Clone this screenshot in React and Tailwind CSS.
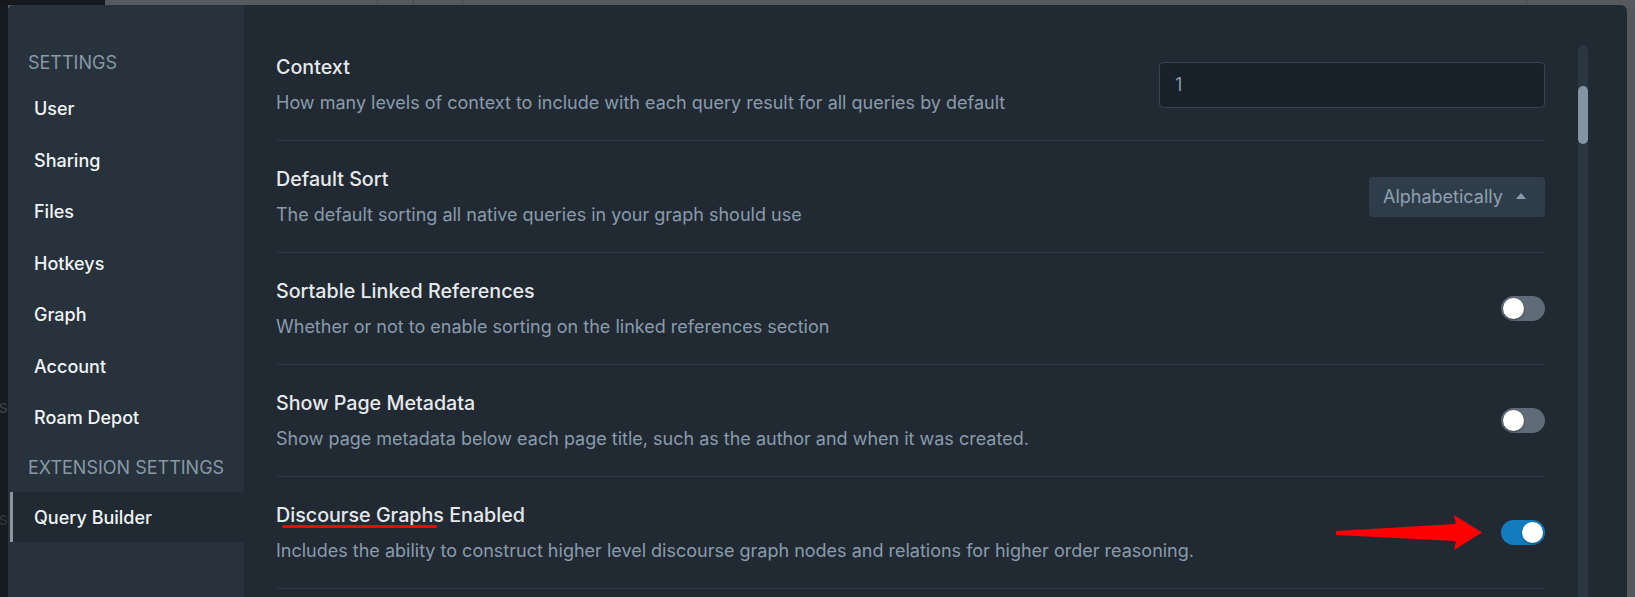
export default function App() {
  const rows = [
    { t: "Context", d: "How many levels of context to include with each query result for all queries by default", c: "input" },
    { t: "Default Sort", d: "The default sorting all native queries in your graph should use", c: "select" },
    { t: "Sortable Linked References", d: "Whether or not to enable sorting on the linked references section", c: "off" },
    { t: "Show Page Metadata", d: "Show page metadata below each page title, such as the author and when it was created.", c: "off" },
    { t: "Discourse Graphs Enabled", d: "Includes the ability to construct higher level discourse graph nodes and relations for higher order reasoning.", c: "on" },
  ];
  const items = ["User", "Sharing", "Files", "Hotkeys", "Graph", "Account", "Roam Depot"];
  return (
    <div className="w-[1635px] h-[597px] overflow-hidden flex flex-col bg-[#55595e] font-['Inter',sans-serif]">
      {/* backdrop top strip */}
      <div className="h-[5px] flex shrink-0">
        <div className="w-[105px] bg-[#15191e]" />
        <div className="flex-1 flex bg-[#565a5f]">
          <div className="w-[273px] border-r border-[#484c51]" />
          <div className="w-[36px] border-r border-[#484c51]" />
          <div className="w-[49px] border-r border-[#484c51]" />
          <div className="w-[1064px] border-r border-[#484c51]" />
        </div>
      </div>
      <div className="flex-1 flex min-h-0">
        {/* left backdrop */}
        <div className="w-[8px] bg-[#161b21] relative overflow-hidden">
          <div className="absolute right-0 top-[388px] text-[18px] text-[#3a424b] whitespace-nowrap">ns</div>
          <div className="absolute right-0 top-[500px] text-[18px] text-[#2c333b] whitespace-nowrap">s</div>
        </div>
        {/* dialog */}
        <div className="flex-1 flex rounded-t-[6px] overflow-hidden bg-[#212a33]">
          {/* sidebar */}
          <div className="w-[236px] shrink-0 bg-[#27323c] pt-[37px] flex flex-col">
            <div className="h-[41px] flex items-center pl-[20px] text-[18px] text-[#8798a6] uppercase">Settings</div>
            {items.map((i) => (
              <div key={i} className="h-[51.5px] flex items-center pl-[26px] text-[18px] font-medium text-[#f1f4f6]">{i}</div>
            ))}
            <div className="h-[48.5px] flex items-center pl-[20px] text-[18px] text-[#8798a6] uppercase">Extension Settings</div>
            <div className="h-[50px] ml-[2px] flex items-center border-l-[3px] border-[#8c949c] bg-[#212a33] pl-[21px] text-[18px] font-medium text-[#f1f4f6]">Query Builder</div>
          </div>
          {/* main */}
          <div className="flex-1 flex pl-[32px]">
            <div className="w-[1269px] pt-[24px] flex flex-col">
              {rows.map((r, idx) => (
                <div key={r.t} className="h-[112px] shrink-0 flex items-center justify-between border-b border-[#2b3945]">
                  <div className="flex flex-col">
                    <div className="text-[19.7px] leading-[26px] font-medium text-[#e6e9ec]">
                      {idx === 4 ? (
                        <>
                          <span className="relative">
                            Discourse Graphs
                            <span className="absolute left-[6px] top-[22px] w-[155px] h-[3px] rounded-full bg-[#f50000]" />
                          </span>{" "}
                          Enabled
                        </>
                      ) : (
                        r.t
                      )}
                    </div>
                    <div className="mt-[11px] text-[18px] leading-[24px] text-[#8a9bab]">{r.d}</div>
                  </div>
                  {r.c === "input" && (
                    <div className="w-[386px] h-[46px] rounded-[4px] border border-[#36434f] bg-[#18202a] flex items-center pl-[15px] text-[18px] text-[#8a9bab]">1</div>
                  )}
                  {r.c === "select" && (
                    <div className="w-[176px] h-[40px] rounded-[4px] bg-[#2f3d4a] flex items-center justify-between pl-[14px] pr-[19px] text-[18px] text-[#8fa0b0]">
                      <span>Alphabetically</span>
                      <svg width="10" height="6" viewBox="0 0 10 6" className="mb-[2px]">
                        <path d="M0 6 L5 0 L10 6 Z" fill="#8a9bab" />
                      </svg>
                    </div>
                  )}
                  {r.c === "off" && (
                    <div className="w-[44px] h-[25px] rounded-full bg-[#5f6b76] p-[2px] flex items-center">
                      <div className="w-[21px] h-[21px] rounded-full bg-white shadow-[0_1px_2px_rgba(0,0,0,0.4)]" />
                    </div>
                  )}
                  {r.c === "on" && (
                    <div className="relative w-[44px] h-[25px] rounded-full bg-[#137cbd] p-[2px] flex items-center justify-end">
                      <div className="w-[21px] h-[21px] rounded-full bg-white shadow-[0_1px_2px_rgba(0,0,0,0.4)]" />
                      <svg className="absolute left-[-165px] top-[-12px]" width="150" height="50" viewBox="0 0 150 50">
                        <polygon points="0,23 120,16 118,7 146,24.5 118,42 120,33 0,27" fill="#ff0000" />
                      </svg>
                    </div>
                  )}
                </div>
              ))}
            </div>
            <div className="ml-[33px] w-[10px] mt-[40px] rounded-t-full bg-[#2a3742] flex flex-col">
              <div className="mt-[41px] h-[58px] rounded-full bg-[#8394a2]" />
            </div>
          </div>
        </div>
        {/* right backdrop */}
        <div className="w-[8px] bg-[#55595e]" />
      </div>
    </div>
  );
}
